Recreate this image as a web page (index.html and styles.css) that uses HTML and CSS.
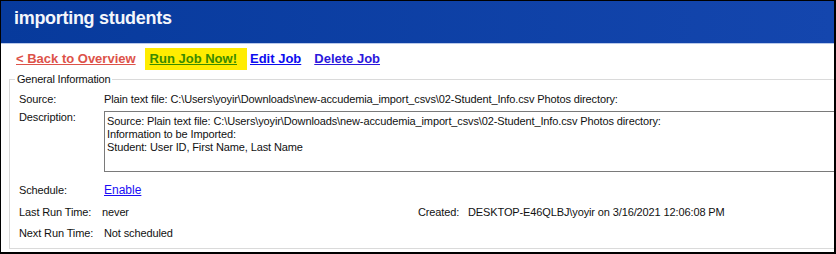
FILE: index.html
```html
<!DOCTYPE html>
<html>
<head>
<meta charset="utf-8">
<link rel="stylesheet" href="styles.css">
</head>
<body>
<div class="frame">
  <div class="header"><h1 class="title">importing students</h1></div>
  <nav class="actions">
    <a class="link back" href="#">&lt; Back to Overview</a>
    <a class="link run" href="#">Run Job Now!</a>
    <a class="link edit" href="#">Edit Job</a>
    <a class="link delete" href="#">Delete Job</a>
  </nav>
  <fieldset class="info">
    <legend class="legend">General Information</legend>
    <div class="row">
      <span class="label">Source:</span>
      <span class="value wide">Plain text file: C:\Users\yoyir\Downloads\new-accudemia_import_csvs\02-Student_Info.csv Photos directory:</span>
    </div>
    <div class="row desc">
      <span class="label">Description:</span>
      <div class="textbox wide">
        <div>Source: Plain text file: C:\Users\yoyir\Downloads\new-accudemia_import_csvs\02-Student_Info.csv Photos directory:</div>
        <div>Information to be Imported:</div>
        <div>Student: User ID, First Name, Last Name</div>
      </div>
    </div>
    <div class="row sched">
      <span class="label">Schedule:</span>
      <a class="value enable" href="#">Enable</a>
    </div>
    <div class="row gap">
      <span class="label">Last Run Time:</span>
      <span class="value never">never</span>
      <span class="label2">Created:</span>
      <span class="value2">DESKTOP-E46QLBJ\yoyir on 3/16/2021 12:06:08 PM</span>
    </div>
    <div class="row gap">
      <span class="label">Next Run Time:</span>
      <span class="value">Not scheduled</span>
    </div>
  </fieldset>
</div>
</body>
</html>
```
FILE: styles.css
```css
* { box-sizing: border-box; }
html, body { margin: 0; padding: 0; background: #ffffff; }
body { font-family: "Liberation Sans", Arial, sans-serif; color: #111; }

.frame {
  width: 836px;
  height: 254px;
  border-style: solid;
  border-color: #000;
  border-width: 1px 2px 2px 1px;
  overflow: hidden;
  background: #fff;
}

.header {
  height: 43px;
  padding: 7px 13px 0;
  background: linear-gradient(to right, #073a9c, #1446ae);
  border-bottom: 1px solid #b9c9ea;
}
.title {
  margin: 0;
  font-size: 18px;
  line-height: 20px;
  font-weight: bold;
  letter-spacing: -0.3px;
  color: #f4f6fb;
}

.actions {
  display: flex;
  align-items: baseline;
  padding: 4px 0 0 15px;
  height: 26px;
}
.link {
  font-size: 13px;
  font-weight: bold;
  line-height: 15px;
  text-decoration: underline;
}
.back { color: #dd5249; margin-right: 9px; }
.run {
  color: #3a8a00;
  background: #ffec00;
  padding: 3px 10px 4px 5px;
  margin-right: 3px;
}
.edit { color: #0c0cf0; margin-right: 13px; }
.delete { color: #2b18dc; }

.info {
  width: 900px;
  margin: 3px 0 0 8px;
  padding: 7px 0 8px 0;
  border: 1px solid #dadada;
  font-size: 11px;
  line-height: 13px;
  letter-spacing: -0.12px;
  color: #111;
}
.legend {
  margin-left: 5px;
  padding: 0 2px;
  font-size: 11px;
  line-height: 13px;
  letter-spacing: -0.2px;
}

.row {
  display: grid;
  grid-template-columns: 85px 314px 50px auto;
  padding-left: 9px;
  line-height: 13px;
  white-space: nowrap;
}
.wide { grid-column: 2 / -1; }
.desc { margin-top: 5px; }
.sched { margin-top: 12px; }
.gap { margin-top: 8.5px; }

.textbox {
  width: 800px;
  height: 61px;
  border: 1px solid #7a7a7a;
  padding: 3px 2px;
  line-height: 13px;
}

.enable {
  font-size: 12px;
  letter-spacing: 0;
  color: #1a0df5;
  text-decoration: underline;
  justify-self: start;
}
.never { margin-left: -2px; }
```
